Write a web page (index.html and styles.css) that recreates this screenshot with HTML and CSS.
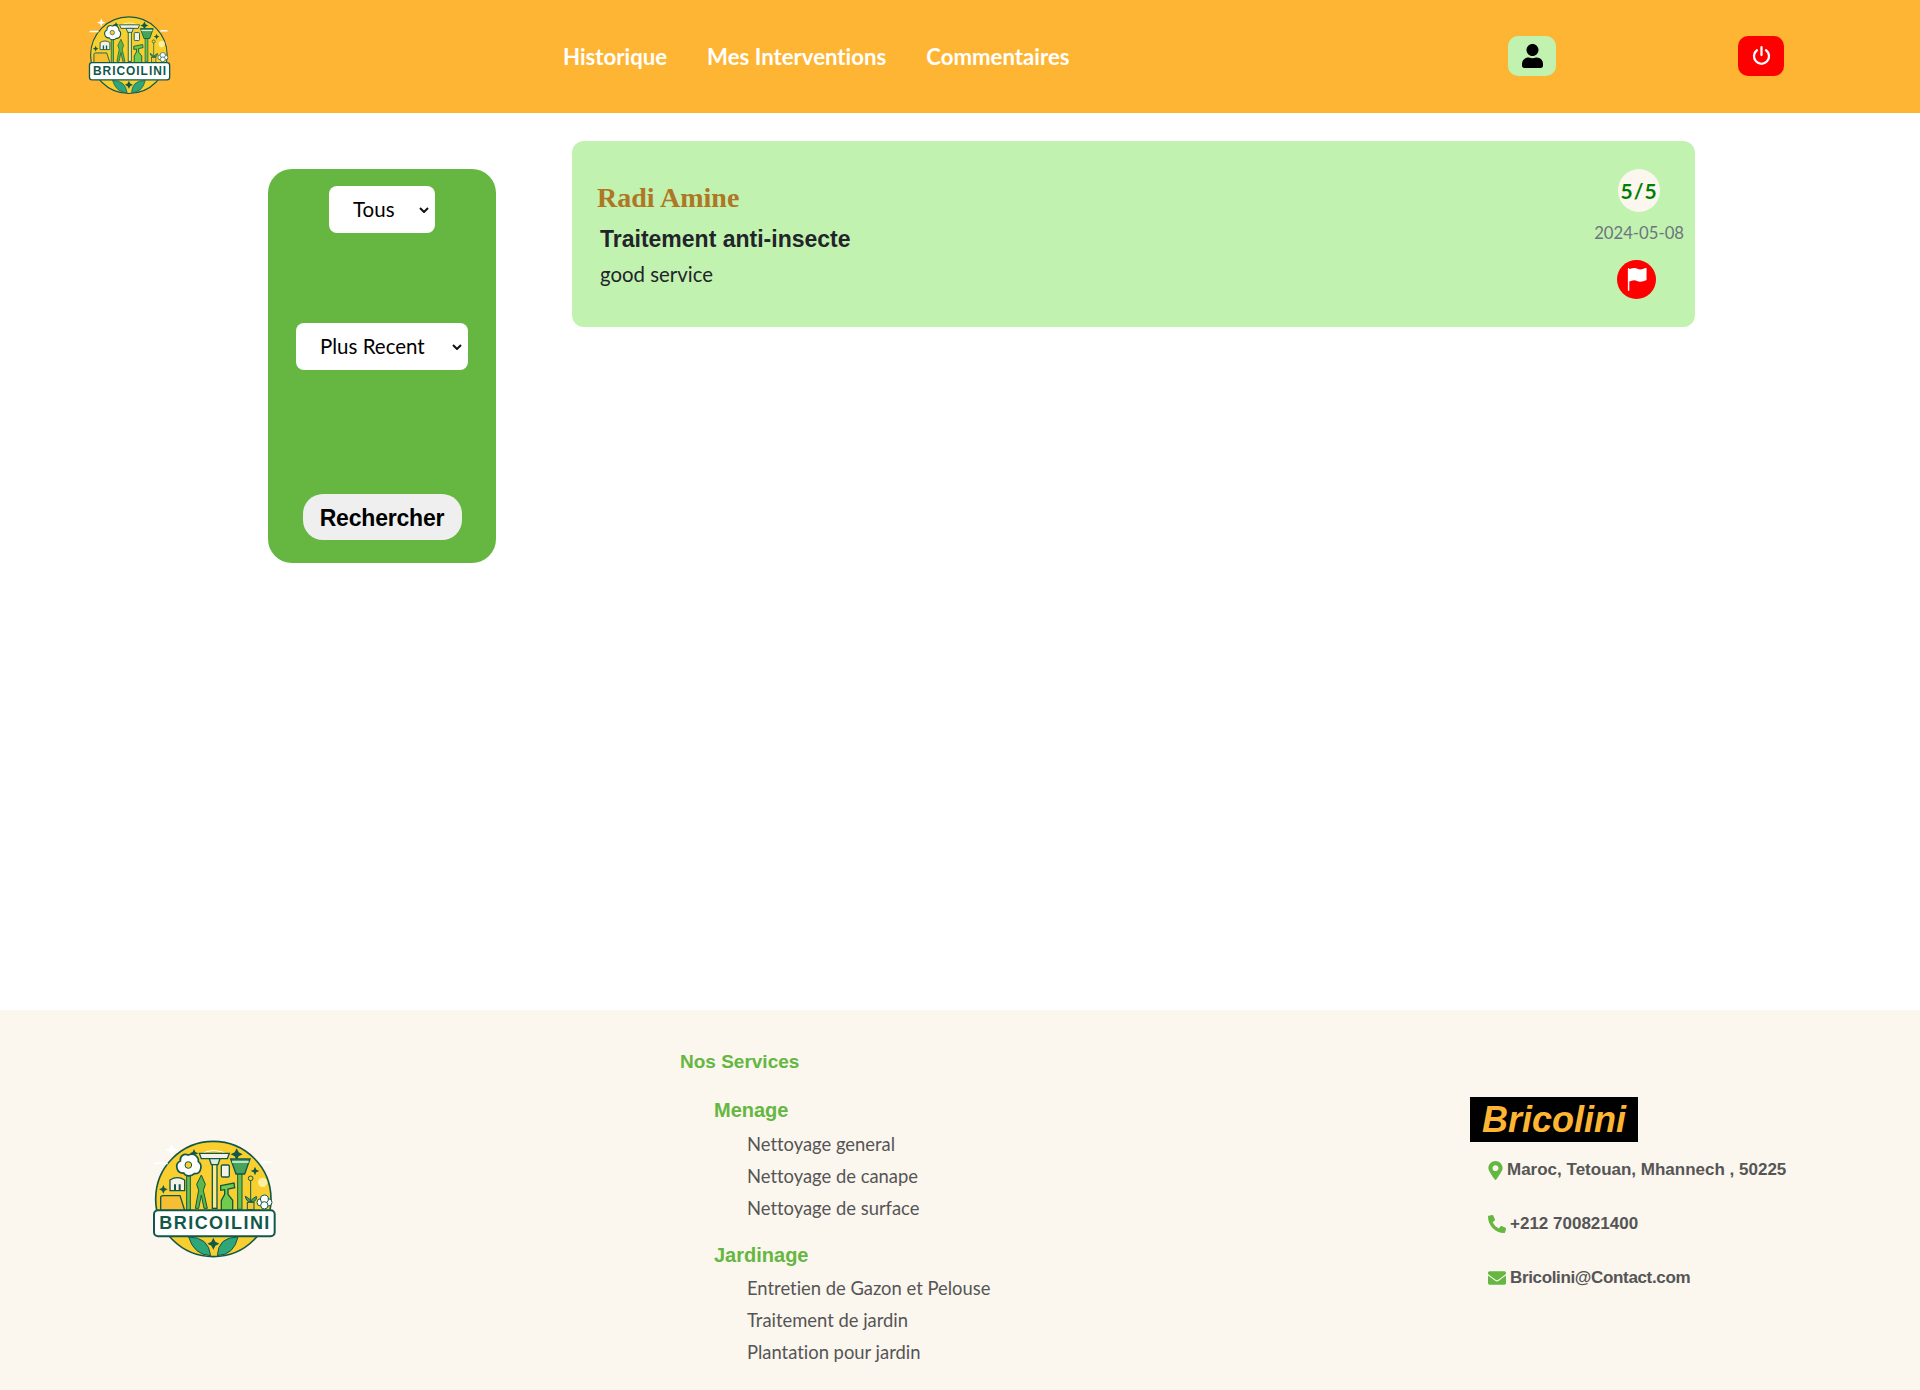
FILE: index.html
```html
<!DOCTYPE html>
<html lang="fr">

<head>
    <meta charset="UTF-8">
    <meta name="viewport" content="width=device-width, initial-scale=1.0">
    <title>Bricolini - Commentaires</title>
    <link rel="stylesheet" href="styles.css">
</head>

<body>
    <svg class="defs" width="0" height="0">
        <defs>
            <symbol id="logo" viewBox="0 0 450 420">
                <!-- badge -->
                <circle cx="220" cy="222" r="173" fill="#f8cf2e" stroke="#12584a" stroke-width="5"/>
                <path d="M95 55l5 15 15 5-15 5-5 15-5-15-15-5 15-5z" fill="#fff"/>
                <path d="M45 112h35l5 6H40zM365 108h25l8 7h-38z" fill="#fff"/>
                <path d="M178 92q42-32 90 0" fill="none" stroke="#fff" stroke-width="3"/>
                <path d="M290 70l6 12 12 6-12 6-6 12-6-12-12-6 12-6zM162 72l4 9 9 4-9 4-4 9-4-9-9-4 9-4zM70 180l4 9 9 4-9 4-4 9-4-9-9-4 9-4zM345 125l4 9 9 4-9 4-4 9-4-9-9-4 9-4z" fill="#12584a"/>
                <circle cx="368" cy="172" r="14" fill="#fdf0a0"/>
                <!-- flower -->
                <rect x="140" y="150" width="11" height="105" fill="#6cc04a" stroke="#12584a" stroke-width="3"/>
                <path d="M145 90c20-8 32 8 30 20 14 10 8 38-12 36-10 10-28 8-32-2-22 2-28-28-10-36-2-14 10-24 24-18z" fill="#fff" stroke="#12584a" stroke-width="5"/>
                <circle cx="145" cy="120" r="10" fill="#f8cf2e" stroke="#12584a" stroke-width="3"/>
                <!-- squeegee -->
                <rect x="217" y="100" width="14" height="150" fill="#fbe98a" stroke="#12584a" stroke-width="4"/>
                <path d="M178 85h90l-6 16h-78z" fill="#f4f1e6" stroke="#12584a" stroke-width="4"/>
                <path d="M208 101h32l-6 18h-20z" fill="#dfe9d8" stroke="#12584a" stroke-width="4"/>
                <!-- broom -->
                <rect x="293" y="145" width="13" height="108" fill="#6cc04a" stroke="#12584a" stroke-width="3"/>
                <path d="M272 102h58l-16 45h-26z" fill="#46a45c" stroke="#12584a" stroke-width="4"/>
                <path d="M276 111h50" stroke="#fff" stroke-width="4"/>
                <!-- bottle tag -->
                <rect x="244" y="120" width="24" height="36" rx="4" fill="#f4f1e6" stroke="#12584a" stroke-width="4"/>
                <!-- spray -->
                <path d="M242 182l40-8 2 14-20 4v16l14 18v30h-34v-30l10-18v-14l-12 2z" fill="#70cc4c" stroke="#12584a" stroke-width="4"/>
                <!-- small house -->
                <path d="M90 165q22-14 44 0v32H90z" fill="#f4f1e6" stroke="#12584a" stroke-width="4"/>
                <path d="M102 178h6v18h-6zM116 178h6v18h-6z" fill="#12584a"/>
                <!-- shears -->
                <path d="M184 150l12 28-6 18 12 54h-10l-8-40-8 40h-10l10-54-6-18z" fill="#5cb84a" stroke="#12584a" stroke-width="3"/>
                <!-- plant -->
                <path d="M332 250v-90" stroke="#12584a" stroke-width="3"/>
                <circle cx="332" cy="160" r="7" fill="#f8cf2e" stroke="#12584a" stroke-width="3"/>
                <path d="M332 225q-20-15-16-10q4 16 16 16zM334 225q18-15 16-8q-2 14-16 14z" fill="#46a45c" stroke="#12584a" stroke-width="3"/>
                <rect x="322" y="232" width="20" height="22" fill="#f6c63a" stroke="#12584a" stroke-width="3"/>
                <!-- cotton -->
                <circle cx="362" cy="232" r="11" fill="#fff" stroke="#12584a" stroke-width="3"/>
                <circle cx="385" cy="232" r="11" fill="#fff" stroke="#12584a" stroke-width="3"/>
                <circle cx="373" cy="222" r="12" fill="#fff" stroke="#12584a" stroke-width="3"/>
                <circle cx="373" cy="241" r="11" fill="#fff" stroke="#12584a" stroke-width="3"/>
                <!-- sponge -->
                <path d="M62 250v-32q0-6 8-6h50l14 44H62z" fill="#f6bf33" stroke="#12584a" stroke-width="4"/>
                <!-- banner -->
                <rect x="42" y="256" width="362" height="78" rx="12" fill="#fff" stroke="#12584a" stroke-width="6"/>
                <text class="logo-word" x="223" y="311" text-anchor="middle" textLength="330">BRICOILINI</text>
                <!-- leaves -->
                <path d="M212 392q-50-2-66-56 60 0 66 56z" fill="#2fa67a" stroke="#12584a" stroke-width="3"/>
                <path d="M232 392q50-2 62-56-60 0-62 56z" fill="#2fa67a" stroke="#12584a" stroke-width="3"/>
                <path d="M220 338l6 12 12 6-12 6-6 12-6-12-12-6 12-6z" fill="#12584a"/>
            </symbol>
        </defs>
    </svg>

    <header class="topbar">
        <svg class="logo-small"><use href="#logo"/></svg>
        <nav class="menu">
            <a href="#">Historique</a>
            <a href="#">Mes Interventions</a>
            <a href="#">Commentaires</a>
        </nav>
        <a class="btn-profil" href="#">
            <svg viewBox="0 0 448 512"><path d="M224 256c70.7 0 128-57.3 128-128S294.7 0 224 0 96 57.3 96 128s57.3 128 128 128zm89.6 32h-16.7c-22.2 10.2-46.9 16-72.9 16s-50.6-5.8-72.9-16h-16.7C60.2 288 0 348.2 0 422.4V464c0 26.5 21.5 48 48 48h352c26.5 0 48-21.5 48-48v-41.6c0-74.2-60.2-134.4-134.4-134.4z"/></svg>
        </a>
        <a class="btn-logout" href="#">
            <svg viewBox="0 0 24 24"><path d="M12 2.5v9M6.8 6a8.6 8.6 0 1 0 10.4 0"/></svg>
        </a>
    </header>

    <main class="contenu">
        <form class="filtres">
            <select class="filtre-note">
                <option>Tous</option>
            </select>
            <select class="filtre-date">
                <option>Plus Recent</option>
            </select>
            <button class="btn-recherche" type="button">Rechercher</button>
        </form>

        <section class="commentaires">
            <article class="carte">
                <div class="carte-texte">
                    <h2>Radi Amine</h2>
                    <h3>Traitement anti-insecte</h3>
                    <p>good service</p>
                </div>
                <div class="carte-meta">
                    <span class="note">5/5</span>
                    <span class="date">2024-05-08</span>
                    <a class="signaler" href="#">
                        <svg viewBox="0 0 16 16"><path d="M14.778.085A.5.5 0 0 1 15 .5V8a.5.5 0 0 1-.314.464L14.5 8l.186.464-.003.001-.006.003-.023.009a12.435 12.435 0 0 1-.397.15c-.264.095-.631.223-1.047.35-.816.252-1.879.523-2.71.523-.847 0-1.548-.28-2.158-.525l-.028-.01C7.68 8.71 7.14 8.5 6.5 8.5c-.7 0-1.638.23-2.437.477A19.626 19.626 0 0 0 3 9.342V15.5a.5.5 0 0 1-1 0V.5a.5.5 0 0 1 1 0v.282c.226-.079.496-.17.79-.26C4.606.272 5.67 0 6.5 0c.84 0 1.524.277 2.121.519l.043.018C9.286.788 9.828 1 10.5 1c.7 0 1.638-.23 2.437-.477a19.587 19.587 0 0 0 1.349-.476l.019-.007.004-.002h.001"/></svg>
                    </a>
                </div>
            </article>
        </section>
    </main>

    <footer class="pied">
        <div class="pied-logo">
            <svg class="logo-grand"><use href="#logo"/></svg>
        </div>

        <div class="pied-services">
            <h4>Nos Services</h4>
            <h5>Menage</h5>
            <ul>
                <li>Nettoyage general</li>
                <li>Nettoyage de canape</li>
                <li>Nettoyage de surface</li>
            </ul>
            <h5>Jardinage</h5>
            <ul>
                <li>Entretien de Gazon et Pelouse</li>
                <li>Traitement de jardin</li>
                <li>Plantation pour jardin</li>
            </ul>
        </div>

        <div class="pied-contact">
            <div class="marque">Bricolini</div>
            <p>
                <svg class="ic-pin" viewBox="0 0 384 512"><path d="M172.268 501.67C26.97 291.031 0 230.413 0 192 0 85.961 85.961 0 192 0s192 85.961 192 192c0 38.413-26.97 99.031-172.268 309.67-9.535 13.774-29.93 13.773-39.464 0zM192 272c44.183 0 80-35.817 80-80s-35.817-80-80-80-80 35.817-80 80 35.817 80 80 80z"/></svg>
                Maroc, Tetouan, Mhannech , 50225
            </p>
            <p>
                <svg viewBox="0 0 512 512"><path d="M497.39 361.8l-112-48a24 24 0 0 0-28 6.9l-49.6 60.6A370.66 370.66 0 0 1 130.6 204.11l60.6-49.6a23.94 23.94 0 0 0 6.9-28l-48-112A24.16 24.16 0 0 0 122.6.61l-104 24A24 24 0 0 0 0 48c0 256.5 207.9 464 464 464a24 24 0 0 0 23.4-18.6l24-104a24.29 24.29 0 0 0-14.01-27.6z"/></svg>
                +212 700821400
            </p>
            <p>
                <svg viewBox="0 0 512 512"><path d="M502.3 190.8c3.9-3.1 9.7-.2 9.7 4.7V400c0 26.5-21.5 48-48 48H48c-26.5 0-48-21.5-48-48V195.6c0-5 5.7-7.8 9.7-4.7 22.4 17.4 52.1 39.5 154.1 113.6 21.1 15.4 56.7 47.8 92.2 47.6 35.7.3 72-32.8 92.3-47.6 102-74.1 131.6-96.3 154-113.7zM256 320c23.2.4 56.6-29.2 73.4-41.4 132.7-96.3 142.8-104.7 173.4-128.7 5.8-4.5 9.2-11.5 9.2-18.9v-19c0-26.5-21.5-48-48-48H48C21.5 64 0 85.5 0 112v19c0 7.4 3.4 14.3 9.2 18.9 30.6 23.9 40.7 32.4 173.4 128.7 16.8 12.2 50.2 41.8 73.4 41.4z"/></svg>
                <span class="courriel">Bricolini@Contact.com</span>
            </p>
        </div>
    </footer>
</body>

</html>
```
FILE: styles.css
```css
body {
    margin: 0;
    font-family: Lato, sans-serif;
    font-variant-ligatures: none;
    color: #212529;
    background-color: #fff;
}

.defs {
    display: block;
    height: 0;
}

.logo-word {
    font-family: "Liberation Sans", sans-serif;
    font-size: 54px;
    font-weight: 700;
    fill: #12584a;
}

/* barre du haut */
.topbar {
    display: flex;
    align-items: center;
    height: 113px;
    padding-left: 80px;
    background-color: #ffb534;
}

.logo-small {
    width: 100px;
    height: 93px;
    margin-bottom: 8px;
}

.menu {
    display: flex;
    gap: 40px;
    margin-left: 383px;
    margin-bottom: 1px;
    width: 945px;
}

.menu a {
    color: #fff;
    font-size: 22.2px;
    font-weight: 700;
    text-decoration: none;
}

.btn-profil,
.btn-logout {
    display: flex;
    align-items: center;
    justify-content: center;
    height: 40px;
    margin-bottom: 2px;
    border-radius: 10px;
}

.btn-profil {
    width: 48px;
    background-color: #c1f2b0;
}

.btn-profil svg {
    width: 21px;
    height: 24px;
}

.btn-logout {
    width: 46px;
    margin-left: 182px;
    background-color: #f00;
}

.btn-logout svg {
    width: 21px;
    height: 21px;
    fill: none;
    stroke: #fff;
    stroke-width: 2.6;
    stroke-linecap: round;
}

/* contenu */
.contenu {
    display: flex;
    align-items: flex-start;
    height: 897px;
    padding-left: 268px;
}

.filtres {
    display: flex;
    flex-direction: column;
    align-items: center;
    box-sizing: border-box;
    width: 228px;
    height: 394px;
    margin-top: 56px;
    padding-top: 17px;
    border-radius: 24px;
    background-color: #65b741;
}

.filtres select {
    height: 47px;
    padding: 0 10px 2px 24px;
    border: none;
    border-radius: 8px;
    background: #fff url("data:image/svg+xml,%3Csvg xmlns='http://www.w3.org/2000/svg' width='10' height='6'%3E%3Cpath d='M1 1l4 4 4-4' fill='none' stroke='%23111' stroke-width='2'/%3E%3C/svg%3E") no-repeat right 6px center;
    color: #000;
    font-family: Lato, sans-serif;
    font-size: 20.5px;
    appearance: none;
}

.filtre-note {
    width: 106px;
}

.filtre-date {
    width: 172px;
    margin-top: 90px;
}

.btn-recherche {
    width: 159px;
    height: 46px;
    margin-top: 124px;
    padding-top: 3px;
    border: none;
    border-radius: 20px;
    background-color: #efefef;
    color: #000;
    font-family: "Liberation Sans", sans-serif;
    font-size: 23px;
    font-weight: 700;
    letter-spacing: -0.2px;
}

.commentaires {
    width: 1123px;
    margin-top: 28px;
    margin-left: 76px;
}

.carte {
    display: flex;
    justify-content: space-between;
    box-sizing: border-box;
    height: 186px;
    padding: 28px 11px 0 25px;
    border-radius: 12px;
    background-color: #c1f2b0;
}

.carte h2 {
    margin: 13px 0 0;
    color: #af7724;
    font-family: "Liberation Serif", serif;
    font-size: 28px;
    font-weight: 700;
    line-height: 32px;
}

.carte h3 {
    margin: 10px 0 0 3px;
    font-family: "Liberation Sans", sans-serif;
    font-size: 23px;
    font-weight: 700;
    line-height: 30px;
}

.carte p {
    margin: 7px 0 0 3px;
    font-size: 20.4px;
    line-height: 27px;
}

.carte-meta {
    display: flex;
    flex-direction: column;
    align-items: center;
}

.note {
    display: flex;
    align-items: center;
    justify-content: center;
    width: 42px;
    height: 43px;
    border-radius: 50%;
    background-color: #fbf6ee;
    color: #008000;
    font-size: 21px;
    font-weight: 700;
    letter-spacing: 1px;
}

.date {
    margin-top: 9px;
    color: #6c757d;
    font-size: 16.7px;
    line-height: 24px;
}

.signaler {
    display: flex;
    align-items: center;
    justify-content: center;
    width: 39px;
    height: 39px;
    margin-top: 15px;
    margin-right: 5px;
    border-radius: 50%;
    background-color: #f00;
}

.signaler svg {
    width: 23px;
    height: 23px;
    fill: #fff;
}

/* pied de page */
.pied {
    display: grid;
    grid-template-columns: 680px 790px 1fr;
    height: 380px;
    background-color: #fbf6ee;
    color: #555;
}

.pied-logo {
    padding: 115px 0 0 140px;
}

.logo-grand {
    width: 150px;
    height: 140px;
}

.pied-services h4 {
    margin: 39px 0 22px;
    color: #65b741;
    font-family: "Liberation Sans", sans-serif;
    font-size: 19px;
    font-weight: 700;
    line-height: 26px;
}

.pied-services h5 {
    margin: 18px 0 0 34px;
    color: #65b741;
    font-family: "Liberation Sans", sans-serif;
    font-size: 20px;
    font-weight: 700;
    line-height: 26px;
}

.pied-services ul {
    margin: 0;
    padding: 4.5px 0 0 67px;
    list-style-type: none;
}

.pied-services li {
    font-size: 18.4px;
    line-height: 32px;
}

.marque {
    width: fit-content;
    margin-top: 87px;
    padding: 0 12px;
    background-color: #000;
    color: #ffb534;
    font-family: "Liberation Sans", sans-serif;
    font-size: 36px;
    font-style: italic;
    font-weight: 700;
    line-height: 45px;
}

.pied-contact p {
    display: flex;
    align-items: center;
    gap: 4px;
    height: 22px;
    margin: 17px 0 0 18px;
    font-family: "Liberation Sans", sans-serif;
    font-size: 17px;
    font-weight: 700;
}

.pied-contact p + p {
    margin-top: 32px;
}

.pied-contact svg {
    width: 18px;
    height: 18px;
    fill: #65b741;
}

.pied-contact .ic-pin {
    width: 15px;
    height: 19px;
}

.courriel {
    letter-spacing: -0.35px;
}
```
